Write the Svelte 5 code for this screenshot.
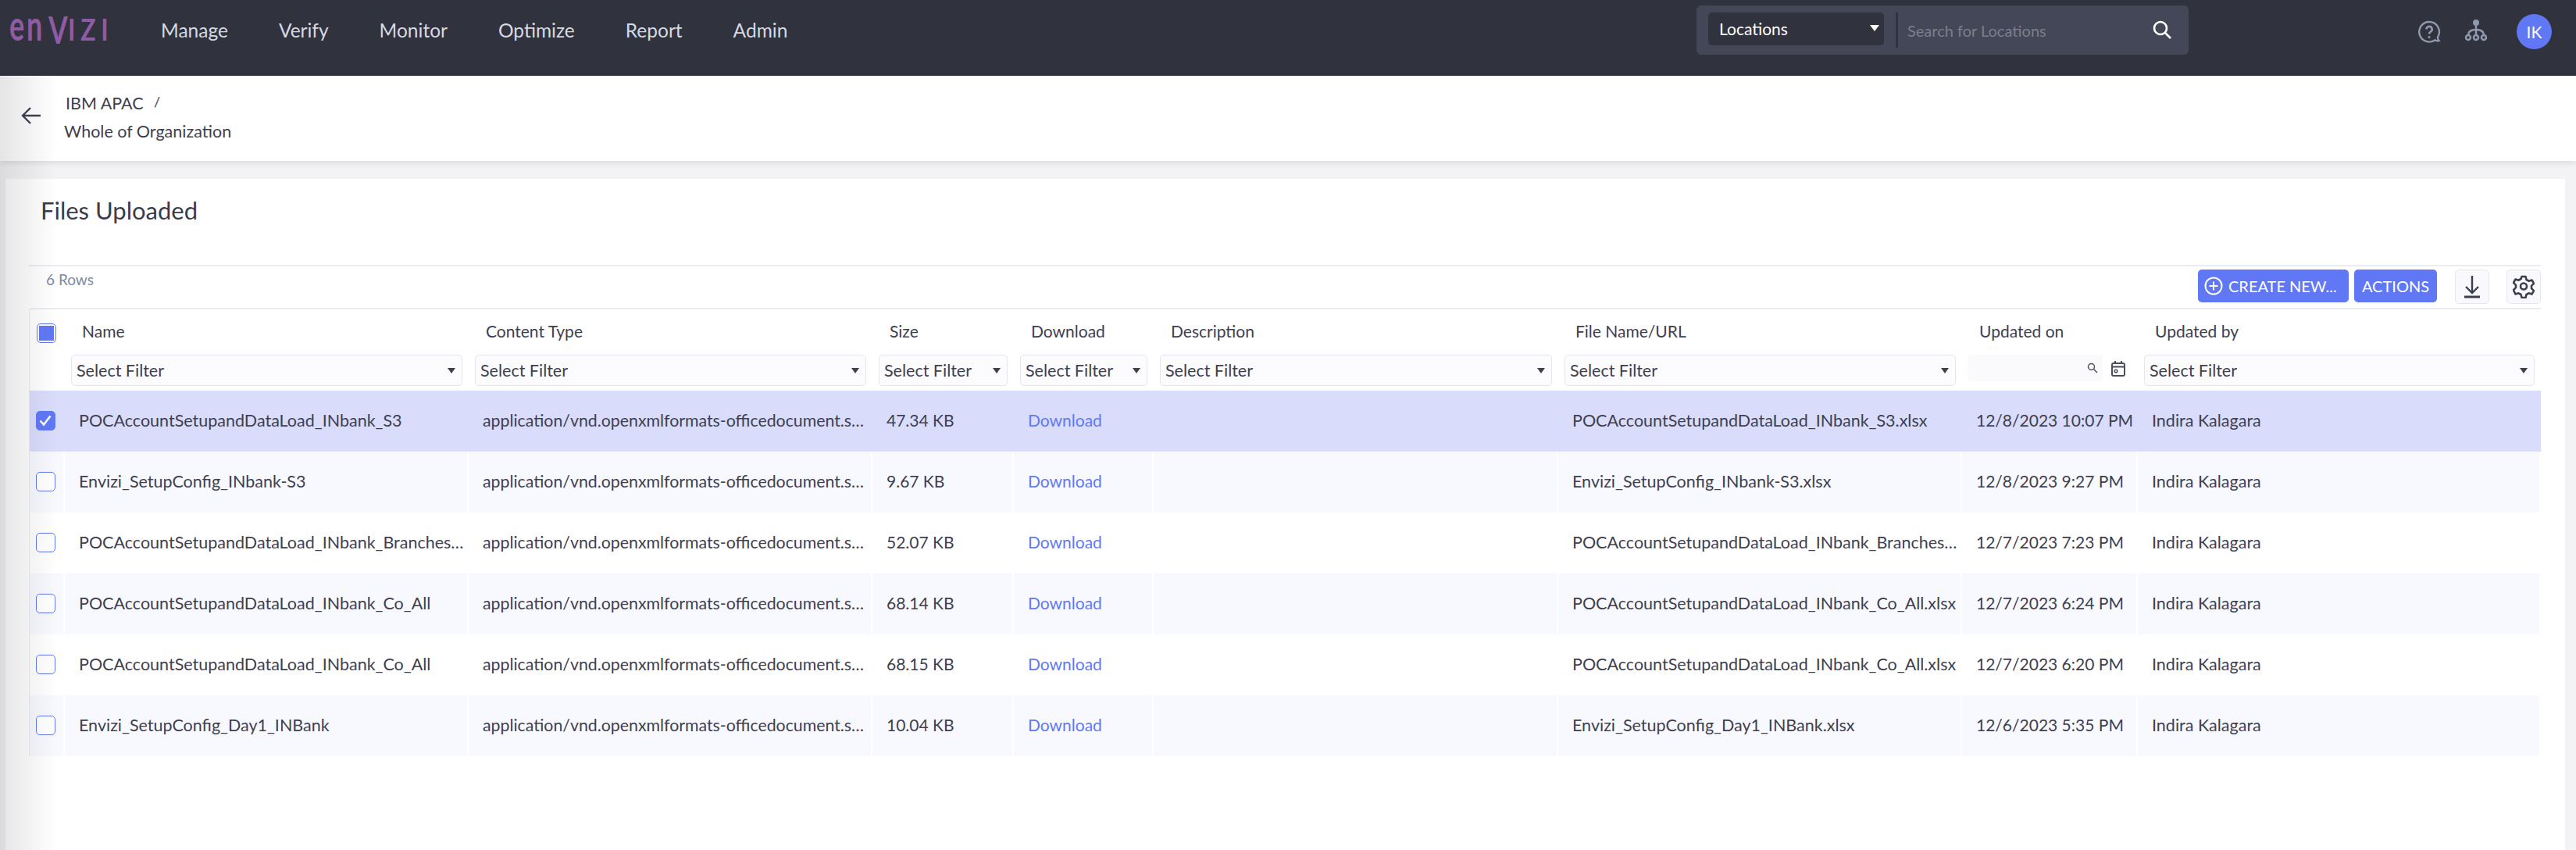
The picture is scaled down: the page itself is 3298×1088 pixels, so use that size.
<script>
  const nav = ['Manage', 'Verify', 'Monitor', 'Optimize', 'Report', 'Admin']
  const mime = 'application/vnd.openxmlformats-officedocument.spreadsheetml.sheet'
  const who = 'Indira Kalagara'

  const columns = [
    { key: 'name', label: 'Name' },
    { key: 'type', label: 'Content Type' },
    { key: 'size', label: 'Size' },
    { key: 'download', label: 'Download' },
    { key: 'desc', label: 'Description' },
    { key: 'file', label: 'File Name/URL' },
    { key: 'on', label: 'Updated on' },
    { key: 'by', label: 'Updated by' }
  ]

  const rows = [
    { name: 'POCAccountSetupandDataLoad_INbank_S3', size: '47.34 KB', file: 'POCAccountSetupandDataLoad_INbank_S3.xlsx', on: '12/8/2023 10:07 PM', selected: true },
    { name: 'Envizi_SetupConfig_INbank-S3', size: '9.67 KB', file: 'Envizi_SetupConfig_INbank-S3.xlsx', on: '12/8/2023 9:27 PM' },
    { name: 'POCAccountSetupandDataLoad_INbank_BranchesAndSites', size: '52.07 KB', file: 'POCAccountSetupandDataLoad_INbank_BranchesAndSites.xlsx', on: '12/7/2023 7:23 PM' },
    { name: 'POCAccountSetupandDataLoad_INbank_Co_All', size: '68.14 KB', file: 'POCAccountSetupandDataLoad_INbank_Co_All.xlsx', on: '12/7/2023 6:24 PM' },
    { name: 'POCAccountSetupandDataLoad_INbank_Co_All', size: '68.15 KB', file: 'POCAccountSetupandDataLoad_INbank_Co_All.xlsx', on: '12/7/2023 6:20 PM' },
    { name: 'Envizi_SetupConfig_Day1_INBank', size: '10.04 KB', file: 'Envizi_SetupConfig_Day1_INBank.xlsx', on: '12/6/2023 5:35 PM' }
  ]
</script>

<div class="page">
  <header class="topbar">
    <div class="logo"><span class="logo-low">en</span><span class="logo-v">V</span><span class="logo-cap">IZI</span></div>
    <nav class="nav">
      {#each nav as item}
        <span class="nav-item">{item}</span>
      {/each}
    </nav>
    <div class="search">
      <div class="search-type">
        <span>Locations</span>
        <i class="caret white"></i>
      </div>
      <div class="search-input">
        <span>Search for Locations</span>
        <svg width="26" height="26" viewBox="0 0 26 26" fill="none" stroke="#fff" stroke-width="2.6">
          <circle cx="11" cy="10" r="8" />
          <path d="M17 16l7 7" />
        </svg>
      </div>
    </div>
    <div class="top-icons">
      <svg class="help" width="30" height="30" viewBox="0 0 30 30" fill="none" stroke="#8f99ad" stroke-width="2.4">
        <path d="M15 2a12.800 12.800 0 1 0 7.500 23.200c1.500 1 3.500 1.300 5 .8-1.200-1.300-1.700-3-1.500-4.500A12.800 12.800 0 0 0 15 2z" />
        <path d="M11.500 11.500a3.600 3.600 0 1 1 5.400 3.100c-1.200.7-1.900 1.300-1.900 2.900" stroke-width="2.600" />
        <circle cx="15" cy="21.500" r="1.500" fill="#8f99ad" stroke="none" />
      </svg>
      <svg class="org" width="30" height="30" viewBox="0 0 30 30" fill="none" stroke="#8f99ad" stroke-width="2.500">
        <circle cx="15" cy="5" r="4" fill="#8f99ad" stroke="none" />
        <path d="M15 8v13M15 14c-6 0-10 2-10 7M15 14c6 0 10 2 10 7" />
        <circle cx="5" cy="24" r="3" />
        <circle cx="15" cy="24" r="3" />
        <circle cx="25" cy="24" r="3" />
      </svg>
      <span class="avatar">IK</span>
    </div>
  </header>

  <div class="crumbs">
    <svg class="back" width="26" height="24" viewBox="0 0 26 24" fill="none" stroke="#3c3f50" stroke-width="2.4">
      <path d="M25 12H2M12 2L2 12l10 10" />
    </svg>
    <div class="crumb-text">
      <div class="crumb-top">IBM APAC <span class="slash">/</span></div>
      <div class="crumb-current">Whole of Organization</div>
    </div>
  </div>

  <main class="card">
    <h1>Files Uploaded</h1>

    <div class="toolbar">
      <span class="count">6 Rows</span>
      <div class="tools">
        <button class="btn create">
          <svg width="24" height="24" viewBox="0 0 24 24" fill="none" stroke="#fff" stroke-width="2">
            <circle cx="12" cy="12" r="10.500" />
            <path d="M12 6.500v11M6.500 12h11" />
          </svg>
          CREATE NEW...
        </button>
        <button class="btn actions">ACTIONS</button>
        <button class="icon-btn" aria-label="Download">
          <svg width="24" height="30" viewBox="0 0 24 30" fill="none" stroke="#3c3f50" stroke-width="2.400">
            <path d="M12 1v22M4 15l8 8 8-8" />
            <path d="M2 28h20" stroke-width="3" />
          </svg>
        </button>
        <button class="icon-btn" aria-label="Settings">
          <svg width="28" height="30" viewBox="0 0 28 30" fill="none" stroke="#3c3f50" stroke-width="2.600" stroke-linejoin="round">
            <path d="M11.500 2h5l1 4 3 1.700 4-1.200 2.500 4.300-3 3v3.400l3 3-2.500 4.300-4-1.200-3 1.700-1 4h-5l-1-4-3-1.700-4 1.200L1 19.200l3-3v-3.400l-3-3 2.500-4.300 4 1.200 3-1.700z" />
            <circle cx="14" cy="14.500" r="4" />
          </svg>
        </button>
      </div>
    </div>

    <div class="grid-wrap">
      <div class="grid head">
        <div class="check-cell">
          <span class="check partial"><i></i></span>
        </div>
        {#each columns as col}
          <div class="head-cell">
            <div class="label">{col.label}</div>
            {#if col.key === 'on'}
              <div class="date-filter">
                <div class="date-input">
                  <svg width="14" height="14" viewBox="0 0 14 14" fill="none" stroke="#4a4d5e" stroke-width="1.500">
                    <circle cx="5.500" cy="5.500" r="4" />
                    <path d="M8.500 8.500L13 13" />
                  </svg>
                </div>
                <svg class="calendar" width="18" height="20" viewBox="0 0 18 20" fill="none" stroke="#4a4d5e" stroke-width="2">
                  <rect x="1" y="3" width="16" height="16" rx="2" />
                  <path d="M1 7.500h16M5 0v4M13 0v4" />
                  <circle cx="6" cy="13" r="1.800" stroke-width="1.500" />
                </svg>
              </div>
            {:else}
              <div class="filter">
                <span>Select Filter</span>
                <i class="caret"></i>
              </div>
            {/if}
          </div>
        {/each}
      </div>

      {#each rows as row, i}
        <div class="grid row" class:selected={row.selected} class:stripe={!row.selected && i % 2 === 1}>
          <div class="check-cell">
            <span class="check" class:on={row.selected}>
              {#if row.selected}
                <svg width="18" height="18" viewBox="0 0 18 18" fill="none" stroke="#fff" stroke-width="2.600">
                  <path d="M2.500 9.500l4.500 5 8.500-11" />
                </svg>
              {/if}
            </span>
          </div>
          <div class="cell">{row.name}</div>
          <div class="cell mime">{mime}</div>
          <div class="cell narrow">{row.size}</div>
          <div class="cell narrow link">Download</div>
          <div class="cell"></div>
          <div class="cell">{row.file}</div>
          <div class="cell narrow">{row.on}</div>
          <div class="cell">{who}</div>
        </div>
      {/each}
    </div>
  </main>

  <div class="side-shade"></div>
</div>

<style>
  :global(body) {
    margin: 0;
    background: #f3f3f5;
  }

  .page {
    position: relative;
    width: 3298px;
    height: 1088px;
    overflow: hidden;
    background: #f3f3f5;
    color: #3e4050;
    font-family: Lato, "Liberation Sans", sans-serif;
    font-size: 21.5px;
    display: flex;
    flex-direction: column;
  }

  .topbar {
    height: 97px;
    flex: none;
    background: #30323e;
    display: flex;
    align-items: flex-start;
    box-sizing: border-box;
  }

  .logo {
    margin: 2px 0 0 12px;
    width: 194px;
    height: 60px;
    color: #8f5ba3;
    display: flex;
    align-items: baseline;
    line-height: 60px;
    font-weight: 700;
  }

  .logo-low {
    font-size: 53px;
    letter-spacing: 4px;
    display: inline-block;
    transform: scaleX(0.68);
    transform-origin: left;
    width: 50px;
  }

  .logo-v {
    font-size: 48px;
    display: inline-block;
    transform: translateY(4px) scaleX(0.74);
    transform-origin: left;
    width: 25px;
  }

  .logo-cap {
    font-size: 37.5px;
    letter-spacing: 8px;
    display: inline-block;
    transform: scaleX(0.85);
    transform-origin: left;
  }

  .nav {
    display: flex;
    gap: 65px;
    padding-top: 24px;
    width: 1966px;
  }

  .nav-item {
    color: #d5d9e3;
    font-size: 24.500px;
    line-height: 30px;
  }

  .search {
    margin-top: 7px;
    width: 630px;
    height: 63px;
    background: #444757;
    border-radius: 6px;
    display: flex;
    align-items: flex-start;
    box-sizing: border-box;
    padding: 9px 21px 0 15px;
  }

  .search-type {
    width: 225px;
    height: 42px;
    background: #30323e;
    border-radius: 5px;
    color: #fff;
    font-size: 21px;
    display: flex;
    align-items: center;
    justify-content: space-between;
    box-sizing: border-box;
    padding: 0 6px 2px 14px;
  }

  .search-input {
    flex: 1;
    margin-left: 15px;
    height: 45px;
    border-left: 3px solid #30323e;
    display: flex;
    align-items: center;
    justify-content: space-between;
    padding-left: 12px;
    color: #7c7f8c;
    font-size: 20px;
  }

  .top-icons {
    margin-left: 293px;
    padding-top: 18px;
    display: flex;
    align-items: flex-start;
  }

  .help {
    margin-top: 8px;
    margin-right: 30px;
  }

  .org {
    margin-top: 6px;
    margin-right: 37px;
  }

  .avatar {
    width: 45px;
    height: 45px;
    border-radius: 50%;
    background: #6078f6;
    color: #fff;
    font-size: 21px;
    display: flex;
    align-items: center;
    justify-content: center;
  }

  .crumbs {
    height: 109px;
    flex: none;
    background: #fff;
    box-shadow: 0 2px 8px rgba(40, 40, 60, 0.12);
    display: flex;
    align-items: flex-start;
    box-sizing: border-box;
    padding-left: 27px;
    z-index: 1;
  }

  .back {
    margin-top: 39px;
  }

  .crumb-text {
    margin-left: 29px;
    padding-top: 19px;
    line-height: 28px;
  }

  .crumb-top {
    margin-left: 2px;
  }

  .slash {
    margin-left: 8px;
    font-size: 18px;
    vertical-align: 3px;
  }

  .crumb-current {
    margin-top: 8px;
  }

  .card {
    flex: 1;
    margin: 23px 14px 0 7px;
    background: #fff;
    box-sizing: border-box;
    padding: 0 31px 0 30px;
  }

  h1 {
    margin: 0;
    padding: 20px 0 0 15px;
    height: 110px;
    box-sizing: border-box;
    font-size: 31px;
    line-height: 40px;
    font-weight: 400;
    color: #3a3c4c;
  }

  .toolbar {
    height: 55px;
    box-sizing: border-box;
    border-top: 2px solid #ebecf3;
    display: flex;
    justify-content: space-between;
    align-items: flex-start;
  }

  .count {
    margin: 5px 0 0 22px;
    font-size: 19px;
    line-height: 24px;
    color: #7d8ba3;
  }

  .tools {
    display: flex;
    align-items: flex-start;
    padding-top: 4px;
  }

  .btn {
    height: 42px;
    border: 0;
    border-radius: 5px;
    background: #6078f6;
    color: #fff;
    font-family: inherit;
    font-size: 20px;
    display: flex;
    align-items: center;
    padding: 0;
  }

  .create {
    width: 193px;
    gap: 7px;
    padding-left: 8px;
    margin-right: 7px;
  }

  .actions {
    width: 106px;
    justify-content: center;
    margin-right: 23px;
  }

  .icon-btn {
    width: 44px;
    height: 44px;
    margin-right: 22px;
    padding: 0;
    background: #f8f8fd;
    border: 1px solid #e6e8f0;
    border-radius: 5px;
    display: flex;
    align-items: center;
    justify-content: center;
  }

  .icon-btn:last-child {
    margin-right: 0;
  }

  .grid-wrap {
    border-top: 2px solid #ebecf3;
    border-left: 1px solid #ebecf3;
    border-top-left-radius: 4px;
  }

  .grid {
    display: grid;
    grid-template-columns: 45px 517px 517px 181px 179px 518px 517px 225px 516px;
  }

  .head {
    height: 104px;
  }

  .check-cell {
    display: flex;
    justify-content: center;
    padding-right: 3px;
  }

  .head .check-cell {
    padding-top: 18px;
  }

  .row .check-cell {
    align-items: center;
    padding-bottom: 2px;
    border-right: 2px solid #fff;
  }

  .check {
    width: 25px;
    height: 25px;
    box-sizing: border-box;
    border: 1.500px solid #6078f6;
    border-radius: 5px;
    background: #fff;
    display: flex;
    align-items: center;
    justify-content: center;
  }

  .check.on {
    background: #6078f6;
  }

  .check.partial i {
    width: 19px;
    height: 19px;
    background: #6078f6;
  }

  .head-cell {
    padding: 0 8px;
    box-sizing: border-box;
  }

  .label {
    height: 58px;
    padding: 14px 0 0 14px;
    box-sizing: border-box;
    font-size: 21px;
    line-height: 28px;
  }

  .filter {
    height: 40px;
    box-sizing: border-box;
    background: #fcfcfe;
    border: 1px solid #e4e6ef;
    border-radius: 5px;
    display: flex;
    align-items: center;
    justify-content: space-between;
    padding: 0 8px 0 6px;
    line-height: 28px;
  }

  .date-filter {
    display: flex;
    align-items: flex-start;
    gap: 12px;
    margin-left: -1px;
  }

  .date-input {
    width: 173px;
    height: 34px;
    background: #fafafd;
    border-radius: 5px;
    display: flex;
    align-items: center;
    justify-content: flex-end;
    padding-right: 6px;
    box-sizing: border-box;
  }

  .calendar {
    margin-top: 8px;
    margin-left: -1px;
  }

  .caret {
    width: 0;
    height: 0;
    border-left: 5px solid transparent;
    border-right: 5px solid transparent;
    border-top: 7px solid #3e4050;
  }

  .caret.white {
    border-top-color: #fff;
    border-left-width: 6px;
    border-right-width: 6px;
    border-top-width: 8px;
  }

  .row {
    height: 78px;
    background: #fff;
  }

  .row.stripe {
    background: #f8f9fe;
  }

  .row.selected {
    background: #d9dcfb;
  }

  .cell {
    padding: 0 0 0 18px;
    line-height: 76px;
    white-space: nowrap;
    overflow: hidden;
    text-overflow: ellipsis;
    border-right: 2px solid #fff;
  }

  .cell.mime {
    font-size: 21.300px;
    padding-right: 4px;
  }

  .cell.narrow {
    font-size: 21px;
  }

  .row.selected .cell,
  .row.selected .check-cell {
    border-right-color: transparent;
  }

  .link {
    color: #6078f6;
  }

  .side-shade {
    position: absolute;
    left: 0;
    top: 97px;
    bottom: 0;
    width: 72px;
    background: linear-gradient(to right, rgba(40, 40, 50, 0.12), rgba(40, 40, 50, 0));
    pointer-events: none;
    z-index: 2;
  }
</style>
